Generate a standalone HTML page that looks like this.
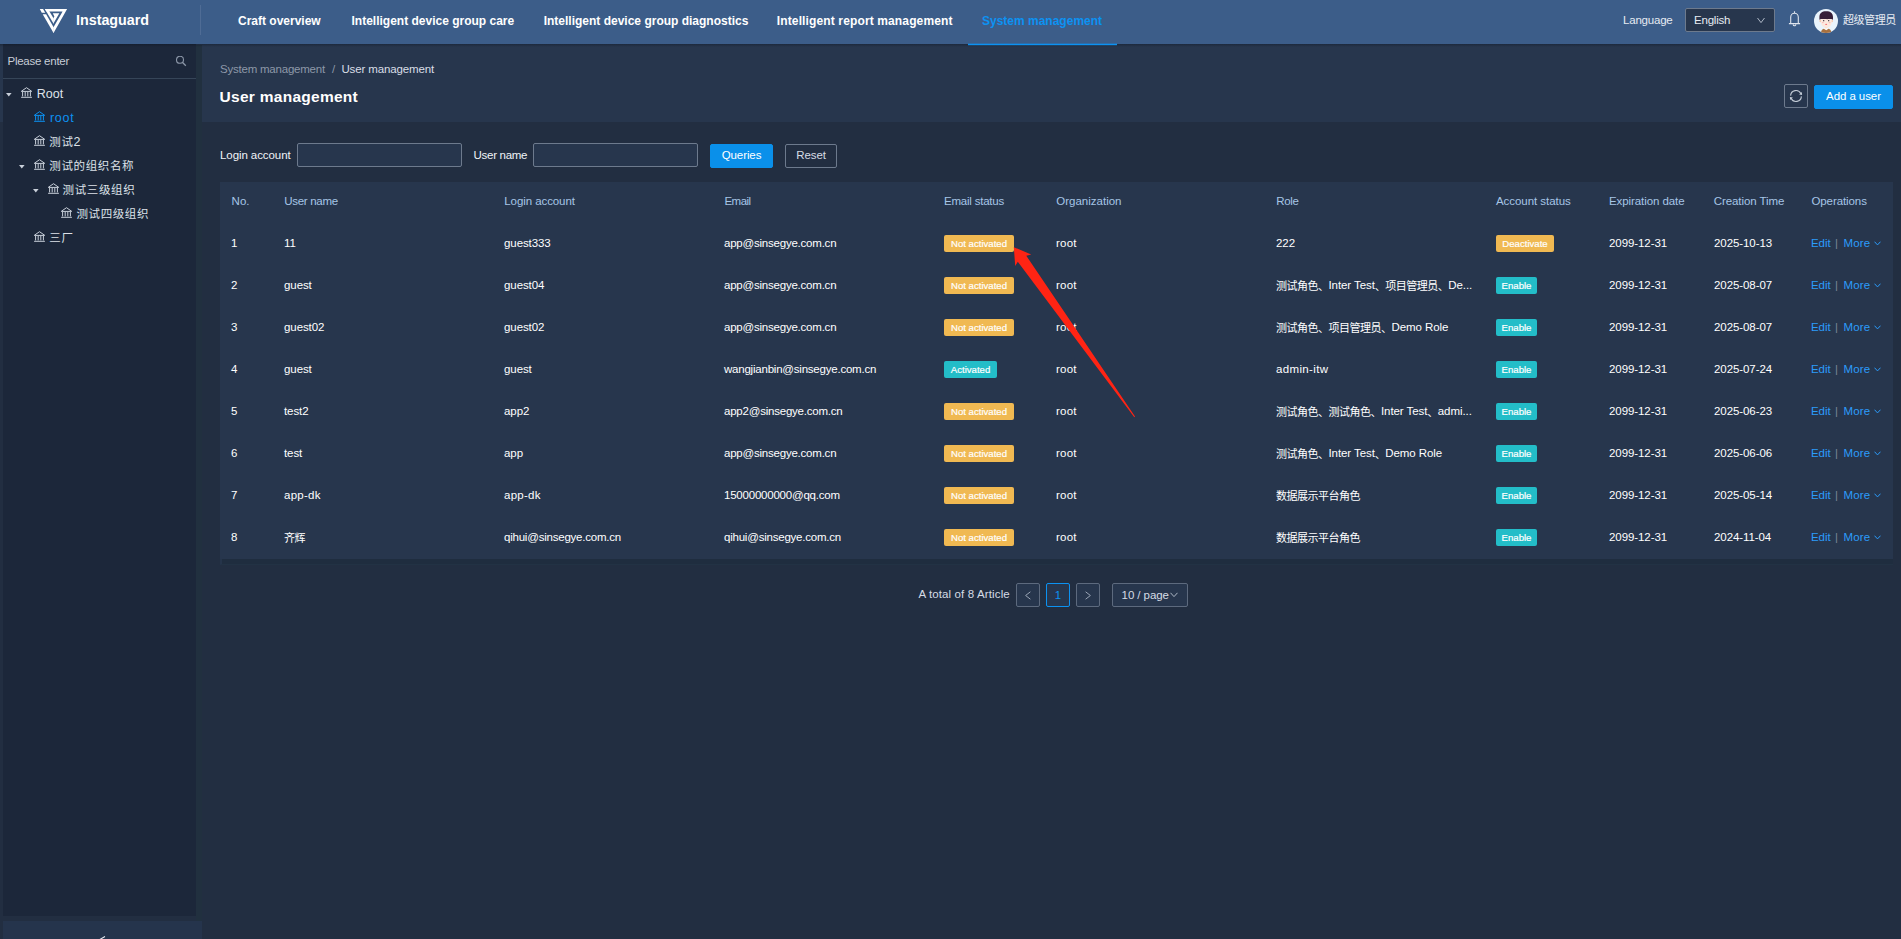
<!DOCTYPE html>
<html lang="en">
<head>
<meta charset="utf-8">
<title>User management</title>
<style>
*{box-sizing:border-box;margin:0;padding:0}
html,body{width:1901px;height:939px;overflow:hidden;background:#222e41}
body{position:relative;font-family:"Liberation Sans","Noto Sans CJK SC",sans-serif;font-size:11.5px;letter-spacing:-0.08px;color:#eef1f5}
.abs{position:absolute}
.c{letter-spacing:-0.45px;font-size:11px}
/* header */
#hdr{z-index:4;position:absolute;left:0;top:0;width:1901px;height:44px;background:#3c5d89}
#hdr .brand{position:absolute;left:76px;top:11px;font-size:14.3px;font-weight:bold;color:#fff;line-height:18px;letter-spacing:0}
#hdr .vline{position:absolute;left:200px;top:5px;width:1px;height:30px;background:#4f6c95}
#hdr .nav{position:absolute;top:0;height:42px;line-height:42px;font-size:12px;font-weight:bold;color:#fff;white-space:nowrap;letter-spacing:0}
#hdr .nav.act{color:#0c92f2}
#hdr .ink{z-index:5;position:absolute;left:968px;top:43px;width:149px;height:3px;background:linear-gradient(to bottom,rgba(12,146,242,.3) 0,rgba(12,146,242,.3) 1px,#0c92f2 1px,#0c92f2 2px,rgba(12,146,242,.2) 2px,rgba(12,146,242,.2) 3px)}
#hdr .lang{position:absolute;left:1623px;top:0;line-height:40px;color:#e6ebf2;letter-spacing:-0.2px}
#hdr .sel{position:absolute;left:1685px;top:8px;width:90px;height:24px;background:#27364d;border:1px solid #6d7a8d;border-radius:2px;line-height:22px;padding-left:8px;color:#e6ebf2}
#hdr .uname{position:absolute;left:1843px;top:0;line-height:40px;color:#e6ebf2;white-space:nowrap}
#shadow{z-index:3;position:absolute;left:0;top:44px;width:1901px;height:3px;background:linear-gradient(to bottom,rgba(8,14,26,.32),rgba(8,14,26,0))}
/* sidebar */
#side{z-index:2;position:absolute;left:3px;top:44px;width:193px;height:872px;background:#1c273a}
#gap{z-index:2;position:absolute;left:196px;top:45px;width:6px;height:876px;background:#21303f}
#foot{z-index:2;position:absolute;left:3px;top:921px;width:199px;height:18px;background:#25344c}
#side .ph{position:absolute;left:4.5px;top:7px;line-height:20px;color:#c6cdd7;letter-spacing:-0.25px}
#side .sep{position:absolute;left:0;top:34px;width:193px;height:1px;background:#364558}
.tr{position:absolute;left:0;white-space:nowrap;height:24px;line-height:24px;color:#dde2e9;font-size:12.5px;letter-spacing:0}
.tr .c{letter-spacing:0.62px;font-size:11.5px;position:relative;top:0}
.tr .bk{position:absolute;top:5.1px}
.tr .ct{position:absolute;top:10.7px}
.tr .tx{position:absolute;top:0}
.tr.sel{color:#0c92f2}
/* main */
#phead{position:absolute;left:0;top:44px;width:1901px;height:78px;background:#27364d}
.bc{position:absolute;top:18px;line-height:14px;white-space:nowrap}
h1{position:absolute;left:219.6px;top:43px;font-size:15.5px;line-height:20px;font-weight:bold;color:#fff;letter-spacing:0.27px;white-space:nowrap}
.btn{position:absolute;height:24px;line-height:20px;border-radius:2px;text-align:center;white-space:nowrap;border:1px solid #6d7a8d;color:#d6dce5}
.btn.p{background:#0a90ea;border-color:#0a90ea;color:#fff}
.inp{position:absolute;height:24px;border:1px solid #6d7a8d;border-radius:2px;background:#27364d}
.lbl{position:absolute;line-height:24px;white-space:nowrap;color:#f0f3f7}
#tbl{position:absolute;left:220px;top:182px;width:1673px;height:377px;background:#27364d}
#tblb{position:absolute;left:220px;top:559px;width:1673px;height:6px;background:#1f2d3f;border-left:2px solid #25344a;border-bottom:1px solid #223244}
.row{position:absolute;left:0;width:1673px;height:42px;line-height:42px;white-space:nowrap;color:#fff}
.row .t{position:absolute;top:0}
.row .c{position:relative;top:1px;letter-spacing:-0.5px}
.row.th{height:40px;line-height:39px;color:#a6c5e6}
.tag{-webkit-text-stroke:0.2px #fff;position:absolute;height:17px;line-height:17px;border-radius:2px;font-size:9.6px;color:#fff;text-align:center;top:13px;letter-spacing:0}
.tag.o{background:#f0b952}
.tag.g{background:#23bdc8}
.lk{color:#2c9cfb}
.dv{color:#7b8797}
.pg{position:absolute;top:583px;height:24px;line-height:22px;background:#27364d;border:1px solid #5d6a7e;border-radius:2px;text-align:center;color:#d6dce5}
</style>
</head>
<body>
<div id="hdr">
  <svg class="abs" style="left:34px;top:4px" width="40" height="34" viewBox="0 0 1105 939"><g fill="#fff"><polygon points="160,135 250,135 310,240 215,240"/><polygon points="240,285 335,285 546,650 546,790 540,800"/><polygon points="300,135 915,135 540,800 534,790 534,650 790,210 343,210"/><polygon points="300,135 386,135 547,409 547,537 541,547"/><polygon points="520,255 700,255 541,535 535,525 535,395 562,345"/></g></svg>
  <div class="brand">Instaguard</div>
  <div class="vline"></div>
  <div class="nav" style="left:238px">Craft overview</div>
  <div class="nav" style="left:351.5px">Intelligent device group care</div>
  <div class="nav" style="left:543.7px">Intelligent device group diagnostics</div>
  <div class="nav" style="left:776.8px;letter-spacing:0.13px">Intelligent report management</div>
  <div class="nav act" style="left:982px">System management</div>
  <div class="ink"></div>
  <div class="lang">Language</div>
  <div class="sel"><span style="letter-spacing:-0.22px">English</span><svg class="abs" style="left:71px;top:8px" width="8" height="7" viewBox="0 0 8 7"><path d="M0.5 1 L4 5.6 L7.5 1" fill="none" stroke="#aeb8c6" stroke-width="1"/></svg></div>
  <svg class="abs" style="left:1788px;top:10px" width="13" height="17" viewBox="0 0 13 17"><path d="M6.5 1.3 V2.7 M2.7 13.2 V7.2 A3.8 4 0 0 1 10.3 7.2 V13.2 M0.9 13.6 H12.1 M5.2 14.4 A1.3 1.3 0 0 0 7.8 14.4" fill="none" stroke="#dfe5ee" stroke-width="1.1"/></svg>
  <svg class="abs" style="left:1814px;top:9px" width="24" height="24" viewBox="0 0 24 24"><defs><clipPath id="av"><circle cx="12" cy="12" r="12"/></clipPath></defs><g clip-path="url(#av)"><rect width="24" height="24" fill="#e9f4fd"/><path d="M7 24 C7 21 8.6 19.6 12.2 19.6 C15.8 19.6 17.4 21 17.4 24 Z" fill="#a8713f"/><path d="M9.8 19.8 L12.2 21.2 L14.6 19.8 L13.4 18.6 H11 Z" fill="#fff"/><rect x="10.8" y="17" width="2.8" height="2.4" fill="#fbdccb"/><ellipse cx="6.4" cy="12" rx="1" ry="1.2" fill="#f8c9b0"/><ellipse cx="18" cy="12" rx="1" ry="1.2" fill="#f8c9b0"/><path d="M7 9 H17.6 V13.4 C17.6 16.4 15 18.4 12.3 18.4 C9.6 18.4 7 16.4 7 13.4 Z" fill="#fde9de"/><path d="M5.4 10.8 V8 C5.4 4 8 2.2 12.2 2.2 C16.4 2.2 19 4 19 8 V10.8 L17.4 9.9 H13.5 L13.1 10.6 L12.6 9.9 H7 Z" fill="#371f38"/><circle cx="9.7" cy="11.7" r="0.65" fill="#2a2030"/><circle cx="14.7" cy="11.7" r="0.65" fill="#2a2030"/><ellipse cx="8.8" cy="13.6" rx="1" ry="0.7" fill="#f9b9b9"/><ellipse cx="15.6" cy="13.6" rx="1" ry="0.7" fill="#f9b9b9"/><ellipse cx="12.2" cy="15.4" rx="1" ry="0.6" fill="#f7777c"/></g></svg>
  <div class="uname"><span class="c">超级管理员</span></div>
</div>
<div id="shadow"></div>
<div id="side">
  <div class="ph">Please enter</div>
  <svg class="abs" style="left:173px;top:12px" width="11" height="11" viewBox="0 0 11 11"><circle cx="4" cy="3.8" r="3.5" fill="none" stroke="#8c97a8" stroke-width="1.1"/><path d="M6.6 6.5 L9.8 9.7" stroke="#8c97a8" stroke-width="1.3"/></svg>
  <div class="sep"></div>
  <div class="tr" style="top:38px"><svg class="ct" style="left:2.7px" width="6" height="4" viewBox="0 0 6 4"><path d="M0 0 H5.6 L2.8 3.4 Z" fill="#c9d0da"/></svg><svg class="bk" style="left:18.4px" width="11" height="11" viewBox="0 0 11 11"><path d="M0.3 4.3 L5.5 0.7 L10.7 4.3 M0.3 4.4 H10.7 M1.6 4.8 V9.4 M4.2 4.8 V9.4 M6.8 4.8 V9.4 M9.4 4.8 V9.4 M0.1 10.3 H10.9" fill="none" stroke="#c9d0da" stroke-width="1"/></svg><span class="tx" style="left:33.8px">Root</span></div>
  <div class="tr sel" style="top:62px"><svg class="bk" style="left:31px" width="11" height="11" viewBox="0 0 11 11"><path d="M0.3 4.3 L5.5 0.7 L10.7 4.3 M0.3 4.4 H10.7 M1.6 4.8 V9.4 M4.2 4.8 V9.4 M6.8 4.8 V9.4 M9.4 4.8 V9.4 M0.1 10.3 H10.9" fill="none" stroke="#0c92f2" stroke-width="1"/></svg><span class="tx" style="left:47px"><span style="letter-spacing:0.7px">root</span></span></div>
  <div class="tr" style="top:86px"><svg class="bk" style="left:31px" width="11" height="11" viewBox="0 0 11 11"><path d="M0.3 4.3 L5.5 0.7 L10.7 4.3 M0.3 4.4 H10.7 M1.6 4.8 V9.4 M4.2 4.8 V9.4 M6.8 4.8 V9.4 M9.4 4.8 V9.4 M0.1 10.3 H10.9" fill="none" stroke="#c9d0da" stroke-width="1"/></svg><span class="tx" style="left:46.3px"><span class="c">测试</span>2</span></div>
  <div class="tr" style="top:110px"><svg class="ct" style="left:16px" width="6" height="4" viewBox="0 0 6 4"><path d="M0 0 H5.6 L2.8 3.4 Z" fill="#c9d0da"/></svg><svg class="bk" style="left:31px" width="11" height="11" viewBox="0 0 11 11"><path d="M0.3 4.3 L5.5 0.7 L10.7 4.3 M0.3 4.4 H10.7 M1.6 4.8 V9.4 M4.2 4.8 V9.4 M6.8 4.8 V9.4 M9.4 4.8 V9.4 M0.1 10.3 H10.9" fill="none" stroke="#c9d0da" stroke-width="1"/></svg><span class="tx" style="left:46.3px"><span class="c">测试的组织名称</span></span></div>
  <div class="tr" style="top:134px"><svg class="ct" style="left:30px" width="6" height="4" viewBox="0 0 6 4"><path d="M0 0 H5.6 L2.8 3.4 Z" fill="#c9d0da"/></svg><svg class="bk" style="left:45px" width="11" height="11" viewBox="0 0 11 11"><path d="M0.3 4.3 L5.5 0.7 L10.7 4.3 M0.3 4.4 H10.7 M1.6 4.8 V9.4 M4.2 4.8 V9.4 M6.8 4.8 V9.4 M9.4 4.8 V9.4 M0.1 10.3 H10.9" fill="none" stroke="#c9d0da" stroke-width="1"/></svg><span class="tx" style="left:59.6px"><span class="c">测试三级组织</span></span></div>
  <div class="tr" style="top:158px"><svg class="bk" style="left:58px" width="11" height="11" viewBox="0 0 11 11"><path d="M0.3 4.3 L5.5 0.7 L10.7 4.3 M0.3 4.4 H10.7 M1.6 4.8 V9.4 M4.2 4.8 V9.4 M6.8 4.8 V9.4 M9.4 4.8 V9.4 M0.1 10.3 H10.9" fill="none" stroke="#c9d0da" stroke-width="1"/></svg><span class="tx" style="left:73.4px"><span class="c">测试四级组织</span></span></div>
  <div class="tr" style="top:182px"><svg class="bk" style="left:31px" width="11" height="11" viewBox="0 0 11 11"><path d="M0.3 4.3 L5.5 0.7 L10.7 4.3 M0.3 4.4 H10.7 M1.6 4.8 V9.4 M4.2 4.8 V9.4 M6.8 4.8 V9.4 M9.4 4.8 V9.4 M0.1 10.3 H10.9" fill="none" stroke="#c9d0da" stroke-width="1"/></svg><span class="tx" style="left:46.3px"><span class="c">三厂</span></span></div>
</div>
<div id="gap"></div>
<div id="foot"><svg class="abs" style="left:94.5px;top:14.5px" width="8" height="8" viewBox="0 0 8 8"><path d="M7 0.5 L1 4 L7 7.5" fill="none" stroke="#e6ebf2" stroke-width="1.1"/></svg></div>
<div id="phead">
  <div class="bc" style="left:220px;color:#8d98a8;letter-spacing:-0.22px">System management</div>
  <div class="bc" style="left:332px;color:#8d98a8">/</div>
  <div class="bc" style="left:341.4px;color:#d9dee6;letter-spacing:-0.12px">User management</div>
  <h1>User management</h1>
  <div class="btn" style="left:1784px;top:40px;width:24px"><svg class="abs" style="left:4px;top:4px" width="14" height="14" viewBox="0 0 14 14"><path d="M1.6 6.6 A5.4 5.4 0 0 1 11.9 4.7 M12.4 7.4 A5.4 5.4 0 0 1 2.1 9.3" fill="none" stroke="#c3cbd6" stroke-width="1.1"/><path d="M10.1 5.5 L12.9 3 L13.1 6.1 Z M3.9 8.5 L1.1 11 L0.9 7.9 Z" fill="#c3cbd6"/></svg></div>
  <div class="btn p" style="left:1814px;top:41px;width:79px">Add a user</div>
</div>
<div class="lbl" style="left:220px;top:143px">Login account</div>
<div class="inp" style="left:297px;top:143px;width:165px"></div>
<div class="lbl" style="left:473.6px;top:143px;letter-spacing:-0.3px">User name</div>
<div class="inp" style="left:533px;top:143px;width:165px"></div>
<div class="btn p" style="left:710px;top:144px;width:63px">Queries</div>
<div class="btn" style="left:785px;top:144px;width:52px">Reset</div>
<div id="tbl">
  <div class="row th" style="top:0"><span class="t" style="left:11.6px;letter-spacing:0px">No.</span><span class="t" style="left:64.3px;letter-spacing:-0.3px">User name</span><span class="t" style="left:284.3px;letter-spacing:-0.08px">Login account</span><span class="t" style="left:504.5px;letter-spacing:-0.55px">Email</span><span class="t" style="left:724px;letter-spacing:-0.22px">Email status</span><span class="t" style="left:836.3px;letter-spacing:0px">Organization</span><span class="t" style="left:1056.3px;letter-spacing:-0.35px">Role</span><span class="t" style="left:1276px;letter-spacing:-0.05px">Account status</span><span class="t" style="left:1389px;letter-spacing:-0.08px">Expiration date</span><span class="t" style="left:1493.7px;letter-spacing:-0.08px">Creation Time</span><span class="t" style="left:1591.4px;letter-spacing:-0.08px">Operations</span></div>
  <div class="row" style="top:40px"><span class="t" style="left:11px">1</span><span class="t" style="left:64px">11</span><span class="t" style="left:284px">guest333</span><span class="t" style="left:504px;letter-spacing:-0.22px">app@sinsegye.com.cn</span><span class="tag o" style="left:724px;width:70px">Not activated</span><span class="t" style="left:836px;letter-spacing:0.25px">root</span><span class="t" style="left:1056px">222</span><span class="tag o" style="left:1276px;width:58px">Deactivate</span><span class="t" style="left:1389px">2099-12-31</span><span class="t" style="left:1494px">2025-10-13</span><span class="t lk" style="left:1591px">Edit</span><span class="t dv" style="left:1615px">|</span><span class="t lk" style="left:1623.5px;letter-spacing:0.15px">More</span><svg class="abs" style="left:1654px;top:19px" width="7" height="5" viewBox="0 0 7 5"><path d="M0.5 0.7 L3.5 3.9 L6.5 0.7" fill="none" stroke="#2c9cfb" stroke-width="1"/></svg></div>
  <div class="row" style="top:82px"><span class="t" style="left:11px">2</span><span class="t" style="left:64px">guest</span><span class="t" style="left:284px">guest04</span><span class="t" style="left:504px;letter-spacing:-0.22px">app@sinsegye.com.cn</span><span class="tag o" style="left:724px;width:70px">Not activated</span><span class="t" style="left:836px;letter-spacing:0.25px">root</span><span class="t" style="left:1056px"><span class="c">测试角色、</span>Inter Test<span class="c">、项目管理员、</span>De...</span><span class="tag g" style="left:1276px;width:41px">Enable</span><span class="t" style="left:1389px">2099-12-31</span><span class="t" style="left:1494px">2025-08-07</span><span class="t lk" style="left:1591px">Edit</span><span class="t dv" style="left:1615px">|</span><span class="t lk" style="left:1623.5px;letter-spacing:0.15px">More</span><svg class="abs" style="left:1654px;top:19px" width="7" height="5" viewBox="0 0 7 5"><path d="M0.5 0.7 L3.5 3.9 L6.5 0.7" fill="none" stroke="#2c9cfb" stroke-width="1"/></svg></div>
  <div class="row" style="top:124px"><span class="t" style="left:11px">3</span><span class="t" style="left:64px">guest02</span><span class="t" style="left:284px">guest02</span><span class="t" style="left:504px;letter-spacing:-0.22px">app@sinsegye.com.cn</span><span class="tag o" style="left:724px;width:70px">Not activated</span><span class="t" style="left:836px;letter-spacing:0.25px">root</span><span class="t" style="left:1056px"><span class="c">测试角色、项目管理员、</span>Demo Role</span><span class="tag g" style="left:1276px;width:41px">Enable</span><span class="t" style="left:1389px">2099-12-31</span><span class="t" style="left:1494px">2025-08-07</span><span class="t lk" style="left:1591px">Edit</span><span class="t dv" style="left:1615px">|</span><span class="t lk" style="left:1623.5px;letter-spacing:0.15px">More</span><svg class="abs" style="left:1654px;top:19px" width="7" height="5" viewBox="0 0 7 5"><path d="M0.5 0.7 L3.5 3.9 L6.5 0.7" fill="none" stroke="#2c9cfb" stroke-width="1"/></svg></div>
  <div class="row" style="top:166px"><span class="t" style="left:11px">4</span><span class="t" style="left:64px">guest</span><span class="t" style="left:284px">guest</span><span class="t" style="left:504px;letter-spacing:-0.22px">wangjianbin@sinsegye.com.cn</span><span class="tag g" style="left:724px;width:53px">Activated</span><span class="t" style="left:836px;letter-spacing:0.25px">root</span><span class="t" style="left:1056px"><span style="letter-spacing:0.35px">admin-itw</span></span><span class="tag g" style="left:1276px;width:41px">Enable</span><span class="t" style="left:1389px">2099-12-31</span><span class="t" style="left:1494px">2025-07-24</span><span class="t lk" style="left:1591px">Edit</span><span class="t dv" style="left:1615px">|</span><span class="t lk" style="left:1623.5px;letter-spacing:0.15px">More</span><svg class="abs" style="left:1654px;top:19px" width="7" height="5" viewBox="0 0 7 5"><path d="M0.5 0.7 L3.5 3.9 L6.5 0.7" fill="none" stroke="#2c9cfb" stroke-width="1"/></svg></div>
  <div class="row" style="top:208px"><span class="t" style="left:11px">5</span><span class="t" style="left:64px">test2</span><span class="t" style="left:284px">app2</span><span class="t" style="left:504px;letter-spacing:-0.22px">app2@sinsegye.com.cn</span><span class="tag o" style="left:724px;width:70px">Not activated</span><span class="t" style="left:836px;letter-spacing:0.25px">root</span><span class="t" style="left:1056px"><span class="c">测试角色、测试角色、</span>Inter Test<span class="c">、</span>admi...</span><span class="tag g" style="left:1276px;width:41px">Enable</span><span class="t" style="left:1389px">2099-12-31</span><span class="t" style="left:1494px">2025-06-23</span><span class="t lk" style="left:1591px">Edit</span><span class="t dv" style="left:1615px">|</span><span class="t lk" style="left:1623.5px;letter-spacing:0.15px">More</span><svg class="abs" style="left:1654px;top:19px" width="7" height="5" viewBox="0 0 7 5"><path d="M0.5 0.7 L3.5 3.9 L6.5 0.7" fill="none" stroke="#2c9cfb" stroke-width="1"/></svg></div>
  <div class="row" style="top:250px"><span class="t" style="left:11px">6</span><span class="t" style="left:64px">test</span><span class="t" style="left:284px">app</span><span class="t" style="left:504px;letter-spacing:-0.22px">app@sinsegye.com.cn</span><span class="tag o" style="left:724px;width:70px">Not activated</span><span class="t" style="left:836px;letter-spacing:0.25px">root</span><span class="t" style="left:1056px"><span class="c">测试角色、</span>Inter Test<span class="c">、</span>Demo Role</span><span class="tag g" style="left:1276px;width:41px">Enable</span><span class="t" style="left:1389px">2099-12-31</span><span class="t" style="left:1494px">2025-06-06</span><span class="t lk" style="left:1591px">Edit</span><span class="t dv" style="left:1615px">|</span><span class="t lk" style="left:1623.5px;letter-spacing:0.15px">More</span><svg class="abs" style="left:1654px;top:19px" width="7" height="5" viewBox="0 0 7 5"><path d="M0.5 0.7 L3.5 3.9 L6.5 0.7" fill="none" stroke="#2c9cfb" stroke-width="1"/></svg></div>
  <div class="row" style="top:292px"><span class="t" style="left:11px">7</span><span class="t" style="left:64px;letter-spacing:0.25px">app-dk</span><span class="t" style="left:284px;letter-spacing:0.25px">app-dk</span><span class="t" style="left:504px;letter-spacing:-0.22px">15000000000@qq.com</span><span class="tag o" style="left:724px;width:70px">Not activated</span><span class="t" style="left:836px;letter-spacing:0.25px">root</span><span class="t" style="left:1056px"><span class="c">数据展示平台角色</span></span><span class="tag g" style="left:1276px;width:41px">Enable</span><span class="t" style="left:1389px">2099-12-31</span><span class="t" style="left:1494px">2025-05-14</span><span class="t lk" style="left:1591px">Edit</span><span class="t dv" style="left:1615px">|</span><span class="t lk" style="left:1623.5px;letter-spacing:0.15px">More</span><svg class="abs" style="left:1654px;top:19px" width="7" height="5" viewBox="0 0 7 5"><path d="M0.5 0.7 L3.5 3.9 L6.5 0.7" fill="none" stroke="#2c9cfb" stroke-width="1"/></svg></div>
  <div class="row" style="top:334px"><span class="t" style="left:11px">8</span><span class="t" style="left:64px"><span class="c">齐辉</span></span><span class="t" style="left:284px;letter-spacing:-0.22px">qihui@sinsegye.com.cn</span><span class="t" style="left:504px;letter-spacing:-0.22px">qihui@sinsegye.com.cn</span><span class="tag o" style="left:724px;width:70px">Not activated</span><span class="t" style="left:836px;letter-spacing:0.25px">root</span><span class="t" style="left:1056px"><span class="c">数据展示平台角色</span></span><span class="tag g" style="left:1276px;width:41px">Enable</span><span class="t" style="left:1389px">2099-12-31</span><span class="t" style="left:1494px">2024-11-04</span><span class="t lk" style="left:1591px">Edit</span><span class="t dv" style="left:1615px">|</span><span class="t lk" style="left:1623.5px;letter-spacing:0.15px">More</span><svg class="abs" style="left:1654px;top:19px" width="7" height="5" viewBox="0 0 7 5"><path d="M0.5 0.7 L3.5 3.9 L6.5 0.7" fill="none" stroke="#2c9cfb" stroke-width="1"/></svg></div>
</div>
<div id="tblb"></div>
<div class="lbl" style="left:918.4px;top:582px;color:#d6dce5;letter-spacing:0.13px">A total of 8 Article</div>
<div class="pg" style="left:1016px;width:24px"><svg class="abs" style="left:8px;top:7px" width="6" height="9" viewBox="0 0 6 9"><path d="M5.4 0.8 L0.6 4.5 L5.4 8.2" fill="none" stroke="#9aa5b5" stroke-width="1"/></svg></div>
<div class="pg" style="left:1046px;width:24px;border-color:#0c92f2;color:#0c92f2">1</div>
<div class="pg" style="left:1076px;width:24px"><svg class="abs" style="left:8px;top:7px" width="6" height="9" viewBox="0 0 6 9"><path d="M0.6 0.8 L5.4 4.5 L0.6 8.2" fill="none" stroke="#9aa5b5" stroke-width="1"/></svg></div>
<div class="pg" style="left:1112px;width:76px;text-align:left;padding-left:8.6px">10 / page<svg class="abs" style="left:57px;top:8px" width="8" height="6" viewBox="0 0 8 6"><path d="M0.5 0.8 L4 4.6 L7.5 0.8" fill="none" stroke="#aeb8c6" stroke-width="1"/></svg></div>
<svg class="abs" style="left:1005px;top:240px" width="140" height="185" viewBox="1005 240 140 185"><path d="M1013.8 247.2 L1031.2 254.5 L1026.3 255.8 L1135 416.5 L1134.3 417.2 L1017.8 261.7 L1015.2 266 Z" fill="#ff2414"/></svg>
</body>
</html>
